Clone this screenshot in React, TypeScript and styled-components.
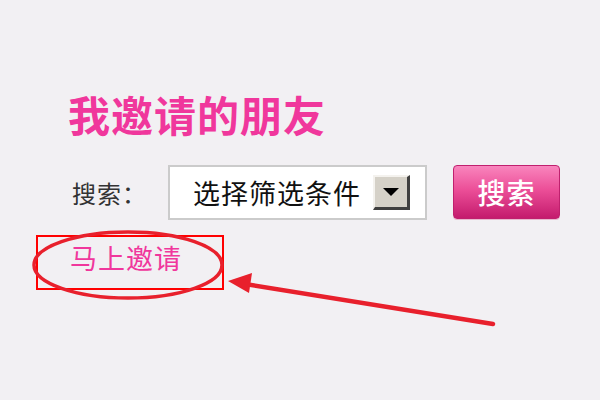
import React from 'react'
import styled, { createGlobalStyle } from 'styled-components'

const CJK = '"Noto Sans CJK SC", "Noto Sans", sans-serif'
const PINK = '#f0379c'
const MARK = '#e8202c'

const Global = createGlobalStyle`
  html, body {
    margin: 0;
    padding: 0;
    background: #f2f0f3;
  }
  body {
    width: 600px;
    height: 400px;
    overflow: hidden;
    font-family: ${CJK};
  }
`

const Page = styled.div`
  position: relative;
  width: 600px;
  height: 400px;
  box-sizing: border-box;
  padding: 88px 0 0 68px;
  display: flex;
  flex-direction: column;
`

const Title = styled.h1`
  margin: 0;
  font-size: 42px;
  line-height: 52px;
  font-weight: 700;
  color: ${PINK};
  letter-spacing: 1px;
`

const SearchRow = styled.div`
  display: flex;
  align-items: center;
  margin-top: 24px;
  height: 56px;
`

const Label = styled.span`
  font-size: 24px;
  color: #333;
  width: 96px;
  padding-left: 4px;
  letter-spacing: 1px;
`

const Select = styled.div`
  width: 259px;
  height: 55px;
  box-sizing: border-box;
  border: 2px solid #cbcbcb;
  background: #fff;
  display: flex;
  align-items: center;
  padding: 0 15px 0 23px;
  justify-content: space-between;
`

const SelectText = styled.span`
  font-size: 27px;
  color: #111;
  letter-spacing: 1px;
`

const DropButton = styled.span`
  width: 37px;
  height: 35px;
  box-sizing: border-box;
  background: #d5d1c8;
  border-top: 2px solid #f4f2ee;
  border-left: 2px solid #f4f2ee;
  border-right: 3px solid #3f3f3f;
  border-bottom: 3px solid #3f3f3f;
  display: flex;
  align-items: center;
  justify-content: center;
`

const Arrow = styled.span`
  width: 0;
  height: 0;
  border-left: 8px solid transparent;
  border-right: 8px solid transparent;
  border-top: 8px solid #000;
`

const SearchButton = styled.button`
  margin-left: 26px;
  width: 107px;
  height: 54px;
  border: 1px solid #c0206e;
  border-radius: 4px;
  background: linear-gradient(#f985bd, #ec4f98 45%, #c41b6d);
  color: #fff;
  font-family: ${CJK};
  font-size: 28px;
  font-weight: 500;
  letter-spacing: 1px;
  padding: 0;
  box-shadow: 0 1px 0 #e9b8cf;
`

const InviteLink = styled.a`
  margin-top: 16px;
  margin-left: 2px;
  font-size: 27px;
  line-height: 44px;
  color: ${PINK};
  text-decoration: none;
  letter-spacing: 1px;
`

const Annotation = styled.svg`
  position: absolute;
  left: 0;
  top: 0;
  pointer-events: none;
`

export default function App() {
  return (
    <Page>
      <Global />
      <Title>我邀请的朋友</Title>
      <SearchRow>
        <Label>搜索：</Label>
        <Select>
          <SelectText>选择筛选条件</SelectText>
          <DropButton>
            <Arrow />
          </DropButton>
        </Select>
        <SearchButton>搜索</SearchButton>
      </SearchRow>
      <InviteLink href="#">马上邀请</InviteLink>
      <Annotation width="600" height="400" viewBox="0 0 600 400">
        <rect x="37" y="236" width="186" height="53" fill="none" stroke="#ff0000" strokeWidth="2" />
        <ellipse cx="128" cy="265" rx="94" ry="33" fill="none" stroke={MARK} strokeWidth="3.5" />
        <line x1="493" y1="324" x2="245" y2="284" stroke={MARK} strokeWidth="4.5" strokeLinecap="round" />
        <polygon points="228,281 252,273 249,293" fill={MARK} />
      </Annotation>
    </Page>
  )
}
